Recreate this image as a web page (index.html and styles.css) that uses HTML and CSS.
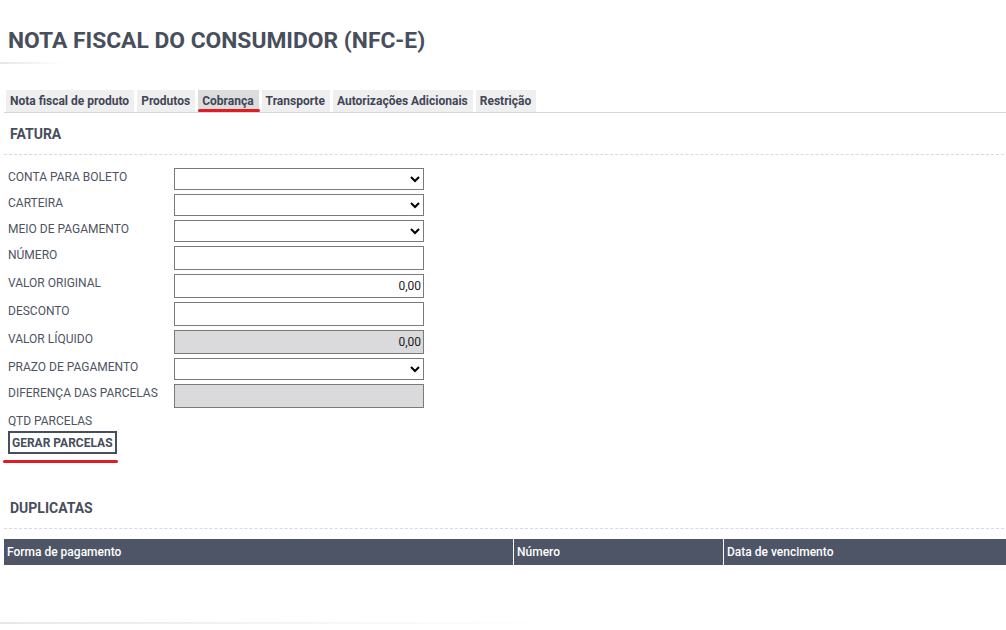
FILE: index.html
```html
<!DOCTYPE html>
<html lang="pt-BR">
<head>
	<meta charset="utf-8">
	<title>Nota Fiscal do Consumidor</title>
	<link rel="stylesheet" href="styles.css">
</head>
<body>
	<div id="page">
		<h1 class="page-title">NOTA FISCAL DO CONSUMIDOR (NFC-E)</h1>
		<div class="title-rule"></div>

		<ul class="tabs">
			<li class="tab">Nota fiscal de produto</li>
			<li class="tab">Produtos</li>
			<li class="tab active">Cobrança</li>
			<li class="tab">Transporte</li>
			<li class="tab">Autorizações Adicionais</li>
			<li class="tab">Restrição</li>
		</ul>

		<h2 class="section-title">FATURA</h2>
		<div class="form-grid">
			<label class="field-label">CONTA PARA BOLETO</label>
			<select class="field-select"><option></option></select>

			<label class="field-label">CARTEIRA</label>
			<select class="field-select"><option></option></select>

			<label class="field-label">MEIO DE PAGAMENTO</label>
			<select class="field-select"><option></option></select>

			<label class="field-label">NÚMERO</label>
			<input class="field-input" type="text" value="">

			<label class="field-label">VALOR ORIGINAL</label>
			<input class="field-input" type="text" value="0,00">

			<label class="field-label">DESCONTO</label>
			<input class="field-input" type="text" value="">

			<label class="field-label">VALOR LÍQUIDO</label>
			<input class="field-input disabled" type="text" value="0,00" readonly>

			<label class="field-label">PRAZO DE PAGAMENTO</label>
			<select class="field-select"><option></option></select>

			<label class="field-label">DIFERENÇA DAS PARCELAS</label>
			<input class="field-input disabled" type="text" value="" readonly>

			<label class="field-label">QTD PARCELAS</label>
			<span></span>
		</div>
		<div class="actions">
			<button class="btn-outline">GERAR PARCELAS</button>
		</div>

		<h2 class="section-title dup">DUPLICATAS</h2>
		<table class="grid-table">
			<thead>
				<tr>
					<th class="col-forma">Forma de pagamento</th>
					<th class="col-numero">Número</th>
					<th class="col-data">Data de vencimento</th>
				</tr>
			</thead>
		</table>
		<div class="bottom-rule"></div>
	</div>
</body>
</html>
```

FILE: styles.css
```css
body {
	margin: 0;
	font-family: Roboto, "Liberation Sans", Arial, sans-serif;
	color: #4a5160;
	background: #fff;
}

#page {
	padding: 0 0 0 4px;
}

.page-title {
	margin: 0;
	padding: 27px 0 0 4px;
	font-size: 22.8px;
	line-height: 28px;
	font-weight: 700;
	color: #474e5c;
}

.title-rule {
	margin: 7px 0 0 -4px;
	width: 64px;
	height: 2px;
	background: linear-gradient(to right, #e6e6e6, #fff);
}

.tabs {
	list-style: none;
	margin: 26px 0 0 0;
	padding: 0 0 0 2px;
	display: flex;
	gap: 3px;
	border-bottom: 1px solid #d6d6d6;
}

.tab {
	position: relative;
	padding: 0 5px 0 4px;
	height: 22px;
	line-height: 23px;
	font-size: 12px;
	font-weight: 700;
	color: #3f4656;
	background: #efefef;
}

.tab.active {
	background: #dcdcdc;
}

.tab.active::after {
	content: "";
	position: absolute;
	left: 0;
	right: -1px;
	bottom: 0;
	height: 3px;
	border-radius: 2px;
	background: #e31b23;
}

.section-title {
	margin: 0;
	padding: 12px 0 0 6px;
	height: 29px;
	font-size: 14px;
	line-height: 18px;
	font-weight: 700;
	color: #474e5c;
	border-bottom: 1px dashed #d9d9d9;
	margin-right: 2px;
}

.section-title.dup {
	margin-top: 28px;
	padding-top: 10px;
	height: 29px;
}

.form-grid {
	display: grid;
	grid-template-columns: 170px 250px;
	row-gap: 4px;
	margin-top: 13px;
}

.field-label {
	padding: 2px 0 0 4px;
	font-size: 12px;
	line-height: 14px;
	color: #4d5462;
	white-space: nowrap;
}

.field-select {
	width: 250px;
	height: 22px;
	margin: 0;
	border: 1px solid #7a7a7a;
	border-radius: 0;
	background: #fff;
	font-family: inherit;
	font-size: 12px;
}

.field-input {
	box-sizing: border-box;
	width: 250px;
	height: 24px;
	margin: 0;
	padding: 0 2px;
	border: 1px solid #7a7a7a;
	border-radius: 0;
	font-family: inherit;
	font-size: 12px;
	text-align: right;
	color: #222;
	background: #fff;
}

.field-input.disabled {
	background: #dadadc;
}

.actions {
	position: relative;
	margin-top: 3px;
	padding-left: 4px;
	height: 30px;
}

.btn-outline {
	box-sizing: border-box;
	height: 23px;
	margin: 0;
	padding: 0 2px;
	border: 2px solid #474e5c;
	background: #fff;
	font-family: inherit;
	font-size: 12px;
	font-weight: 700;
	color: #474e5c;
}

.actions::after {
	content: "";
	position: absolute;
	left: -1px;
	top: 29px;
	width: 115px;
	height: 3px;
	border-radius: 2px;
	background: #e31b23;
}

.grid-table {
	width: 100%;
	margin-top: 10px;
	border-collapse: collapse;
}

.grid-table th {
	height: 26px;
	padding: 0 0 0 3px;
	background: #4e5566;
	color: #fff;
	font-size: 12px;
	font-weight: 500;
	text-align: left;
	border-left: 1px solid #fff;
}

.grid-table th:first-child {
	border-left: none;
}

.col-forma {
	width: 506px;
}

.col-numero {
	width: 206px;
}

.bottom-rule {
	margin: 57px 0 0 -4px;
	width: 560px;
	height: 2px;
	background: linear-gradient(to right, #e8e8e8, #fff);
}
```
